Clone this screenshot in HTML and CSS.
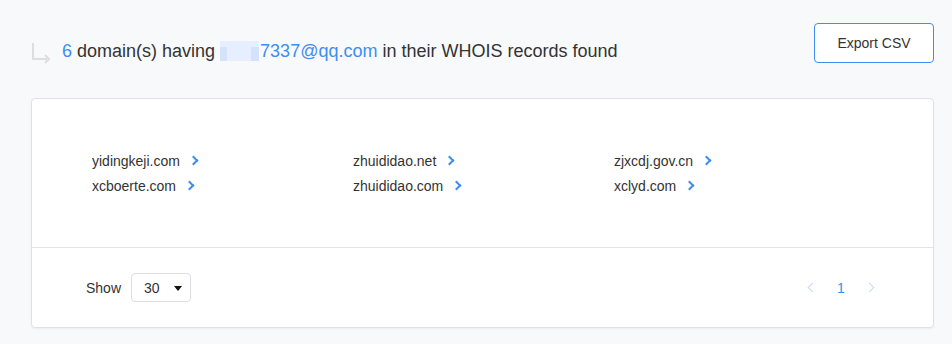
FILE: index.html
```html
<!DOCTYPE html>
<html>
<head>
<meta charset="utf-8">
<link rel="stylesheet" href="styles.css">
</head>
<body>
<div class="page">
  <div class="header">
    <div class="title">
      <svg class="corner" width="20" height="20" viewBox="0 0 20 20"><path d="M2 1 V17 H16" fill="none" stroke="#dcdee2" stroke-width="2"/><path d="M14 13 L18 17 L14 21" fill="none" stroke="#dcdee2" stroke-width="2"/></svg>
      <span class="blue">6</span>&nbsp;domain(s) having&nbsp;<span class="mask"><i class="m1"></i><i class="m2"></i></span><span class="blue">7337@qq.com</span>&nbsp;in their WHOIS records found
    </div>
    <button class="export">Export CSV</button>
  </div>
  <div class="card">
    <div class="list">
      <a class="item">yidingkeji.com<span class="chev"></span></a>
      <a class="item">zhuididao.net<span class="chev"></span></a>
      <a class="item">zjxcdj.gov.cn<span class="chev"></span></a>
      <a class="item">xcboerte.com<span class="chev"></span></a>
      <a class="item">zhuididao.com<span class="chev"></span></a>
      <a class="item">xclyd.com<span class="chev"></span></a>
    </div>
    <div class="footer">
      <div class="show">Show <div class="select">30<span class="caret"></span></div></div>
      <div class="pager">
        <span class="pchev left"></span>
        <span class="pnum">1</span>
        <span class="pchev right"></span>
      </div>
    </div>
  </div>
</div>
</body>
</html>
```
FILE: styles.css
```css
html, body { margin: 0; padding: 0; }
body { background: #f8f9fb; font-family: "Liberation Sans", Arial, sans-serif; color: #333; width: 952px; height: 344px; overflow: hidden; }
.page { padding: 23px 18px 0 31px; }
.header { display: flex; justify-content: space-between; align-items: flex-start; height: 75px; }
.title { display: flex; align-items: center; font-size: 18px; color: #333; margin-top: 16px; height: 24px; }
.corner { margin-right: 11px; margin-top: 2px; overflow: visible; }
.blue { color: #3d8ef0; }
.mask { display: inline-block; width: 39px; height: 20px; background: #e6efff; position: relative; margin-right: 1px; }
.mask i { position: absolute; background: #d4e3fb; }
.mask .m1 { left: 0; top: 6px; width: 7px; height: 14px; }
.mask .m2 { left: 31px; top: 6px; width: 8px; height: 14px; }
.export { width: 120px; height: 40px; border: 1px solid #3d8ef0; border-radius: 4px; background: #fff; color: #333; font-family: "Liberation Sans", Arial, sans-serif; font-size: 14px; padding: 0; cursor: pointer; }
.card { width: 901px; background: #fff; border: 1px solid #e0e2e6; border-radius: 4px; box-shadow: 0 1px 2px rgba(0,0,0,0.05); }
.list { display: grid; grid-template-columns: 261px 261px 261px; row-gap: 7px; padding: 53px 60px 52px 60px; height: 43px; align-content: start; }
.item { font-size: 14px; color: #333; display: flex; align-items: center; height: 18px; }
.chev { display: inline-block; width: 5px; height: 5px; border-right: 2px solid #3d8ef0; border-top: 2px solid #3d8ef0; transform: rotate(45deg); margin-left: 10px; margin-top: -2px; }
.footer { border-top: 1px solid #e3e4e8; height: 79px; display: flex; align-items: center; justify-content: space-between; padding: 0 60px 0 54px; }
.show { display: flex; align-items: center; font-size: 14px; color: #333; gap: 10px; }
.select { width: 60px; height: 29px; border: 1px solid #dcdee2; border-radius: 4px; box-sizing: border-box; display: flex; align-items: center; padding-left: 12px; font-size: 14px; position: relative; }
.caret { position: absolute; right: 8px; top: 12px; width: 0; height: 0; border-left: 4.5px solid transparent; border-right: 4.5px solid transparent; border-top: 5px solid #111; }
.pager { display: flex; align-items: center; }
.pnum { color: #3d8ef0; font-size: 14px; width: 20px; text-align: center; margin: 0 15px; }
.pchev { display: inline-block; width: 6px; height: 6px; border-top: 1.5px solid #c9d9f5; }
.pchev.left { border-left: 1.5px solid #c9d9f5; transform: rotate(-45deg); }
.pchev.right { border-right: 1.5px solid #c9d9f5; transform: rotate(45deg); }
```
